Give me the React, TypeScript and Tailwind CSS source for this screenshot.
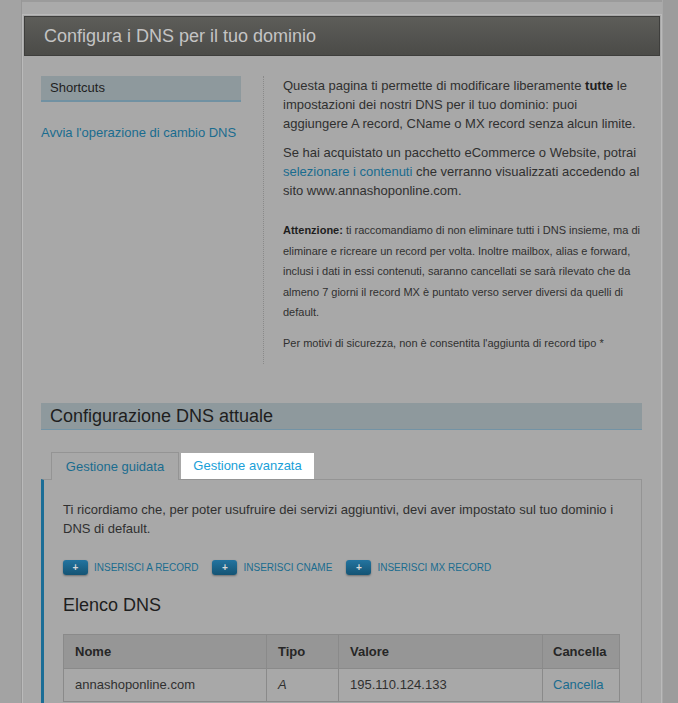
export default function App() {
  return (
    <div className="min-h-screen flex bg-[#a3a3a3] font-['Liberation_Sans',Arial,sans-serif] text-[#303030]">
      {/* left gutter */}
      <div className="w-[22px] shrink-0 border-r border-[#979797]" />

      {/* main column */}
      <div className="w-[640px] shrink-0 bg-[#aaaaaa] border-t-2 border-[#9b9b9b] pt-[12px]">
        <div className="bg-[#a8a8a8] border-l border-r border-t border-[#bababa] pt-px pl-px pr-px pb-10">
          <header className="h-[40px] border border-[#3e3e3c] bg-gradient-to-b from-[#5d5d59] to-[#4b4b48] flex items-center pl-[19px]">
            <h1 className="text-[18px] text-[#c4c4c4]">Configura i DNS per il tuo dominio</h1>
          </header>

          <div className="pl-[17px] pr-[18px]">
            {/* intro */}
            <div className="flex mt-[20px]">
              <aside className="w-[200px] shrink-0">
                <div className="h-[26px] bg-[#8e999d] border-b-2 border-[#7191a2] flex items-center pl-[9px] text-[13px] text-[#1e1e1e]">
                  Shortcuts
                </div>
                <a className="block mt-[21px] text-[13px] leading-[19px] text-[#1a6c8f]">
                  Avvia l'operazione di cambio DNS
                </a>
              </aside>

              <div className="ml-[22px] border-l border-dotted border-[#8a8a8a] pl-[19px] pb-[11px] flex-1">
                <p className="text-[13px] leading-[19px]">
                  Questa pagina ti permette di modificare liberamente <b className="text-[#1e1e1e]">tutte</b> le impostazioni dei nostri DNS per il tuo dominio: puoi aggiungere A record, CName o MX record senza alcun limite.
                </p>
                <p className="mt-[10px] text-[13px] leading-[19px]">
                  Se hai acquistato un pacchetto eCommerce o Website, potrai <a className="text-[#1a6c8f]">selezionare i contenuti</a> che verranno visualizzati accedendo al sito www.annashoponline.com.
                </p>
                <p className="mt-[20px] text-[11px] leading-[20.5px]">
                  <b className="text-[#1e1e1e]">Attenzione:</b> ti raccomandiamo di non eliminare tutti i DNS insieme, ma di eliminare e ricreare un record per volta. Inoltre mailbox, alias e forward, inclusi i dati in essi contenuti, saranno cancellati se sarà rilevato che da almeno 7 giorni il record MX è puntato verso server diversi da quelli di default.
                </p>
                <p className="mt-[10px] text-[11px] leading-[20.5px]">
                  Per motivi di sicurezza, non è consentita l'aggiunta di record tipo *
                </p>
              </div>
            </div>

            {/* current configuration */}
            <h2 className="mt-[39px] h-[27px] bg-[#8e999d] border-b border-[#7393a5] flex items-center pl-[9px] text-[18px] text-[#1e1e1e]">
              Configurazione DNS attuale
            </h2>

            <div className="mt-[22px] pl-[10px] flex items-end">
              <div className="relative z-10 -mb-px w-[128px] h-[28px] border border-b-0 border-[#949494] bg-[#a8a8a8] flex items-center justify-center text-[13px] text-[#1a6c8f]">
                Gestione guidata
              </div>
              <div className="ml-[2px] w-[133px] h-[26px] bg-white flex items-center justify-center text-[13px] text-[#1a9fd8]">
                Gestione avanzata
              </div>
            </div>

            <div className="border border-[#949494] border-l-[3px] border-l-[#1b6d96] pl-[19px] pr-[21px] pt-[20px] pb-6">
              <p className="text-[13px] leading-[19px]">
                Ti ricordiamo che, per poter usufruire dei servizi aggiuntivi, devi aver impostato sul tuo dominio i DNS di default.
              </p>

              <div className="mt-[22px] flex items-center gap-[14px]">
                {['Inserisci A record', 'Inserisci CName', 'Inserisci MX record'].map((label) => (
                  <a key={label} className="flex items-center gap-[6px]">
                    <span className="w-[25px] h-[15px] rounded-[3px] bg-gradient-to-b from-[#2374a0] to-[#145474] shadow-[0_1px_2px_rgba(0,0,0,0.35)] flex items-center justify-center text-[10px] font-bold leading-none text-[#d8d8d8]">
                      +
                    </span>
                    <span className="text-[10px] uppercase text-[#1a6c8f]">{label}</span>
                  </a>
                ))}
              </div>

              <h3 className="mt-[19px] text-[18px] leading-[22px] text-[#1e1e1e]">Elenco DNS</h3>

              <table className="mt-[18px] w-full border-collapse text-[13px]">
                <thead>
                  <tr className="bg-[#969696] text-[#262626]">
                    <th className="h-[34px] w-[203px] border border-[#8a8a8a] pl-[11px] text-left font-bold">Nome</th>
                    <th className="h-[34px] w-[72px] border border-[#8a8a8a] pl-[11px] text-left font-bold">Tipo</th>
                    <th className="h-[34px] w-[204px] border border-[#8a8a8a] pl-[11px] text-left font-bold">Valore</th>
                    <th className="h-[34px] border border-[#8a8a8a] pl-[10px] text-left font-bold">Cancella</th>
                  </tr>
                </thead>
                <tbody>
                  <tr>
                    <td className="h-[33px] border border-[#8a8a8a] pl-[11px]">annashoponline.com</td>
                    <td className="h-[33px] border border-[#8a8a8a] pl-[11px] italic">A</td>
                    <td className="h-[33px] border border-[#8a8a8a] pl-[11px]">195.110.124.133</td>
                    <td className="h-[33px] border border-[#8a8a8a] pl-[10px]">
                      <a className="text-[#1a6c8f]">Cancella</a>
                    </td>
                  </tr>
                </tbody>
              </table>
            </div>
          </div>
        </div>
      </div>

      {/* right gutter */}
      <div className="flex-1 bg-[#9c9c9c] border-l border-[#a8a8a8]" />
    </div>
  );
}
